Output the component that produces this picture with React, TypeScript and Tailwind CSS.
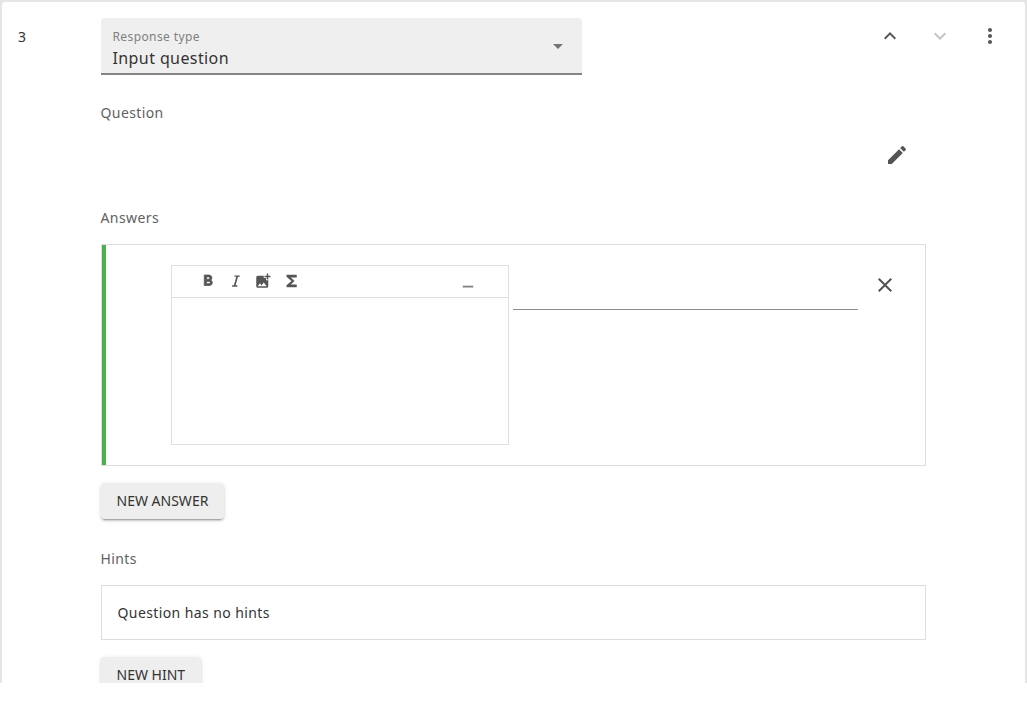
const font = { fontFamily: '"Noto Sans", sans-serif' }

function MdIcon({ d, className }: { d: string; className?: string }) {
    return (
        <svg viewBox="0 0 24 24" className={className} fill="currentColor">
            <path d={d} />
        </svg>
    )
}

const paths = {
    up: 'M7.41 15.41 12 10.83l4.59 4.58L18 14l-6-6-6 6z',
    down: 'M7.41 8.59 12 13.17l4.59-4.58L18 10l-6 6-6-6z',
    more: 'M12 8c1.1 0 2-.9 2-2s-.9-2-2-2-2 .9-2 2 .9 2 2 2zm0 2c-1.1 0-2 .9-2 2s.9 2 2 2 2-.9 2-2-.9-2-2-2zm0 6c-1.1 0-2 .9-2 2s.9 2 2 2 2-.9 2-2-.9-2-2-2z',
    edit: 'M3 17.25V21h3.75L17.81 9.94l-3.75-3.75L3 17.25zM20.71 7.04a1 1 0 0 0 0-1.41l-2.34-2.34a1 1 0 0 0-1.41 0l-1.83 1.83 3.75 3.75 1.83-1.83z',
    close: 'M19 6.41 17.59 5 12 10.59 6.41 5 5 6.41 10.59 12 5 17.59 6.41 19 12 13.41 17.59 19 19 17.59 13.41 12z',
    bold: 'M15.6 10.79c.97-.67 1.65-1.77 1.65-2.79 0-2.26-1.75-4-4-4H7v14h7.04c2.09 0 3.71-1.7 3.71-3.79 0-1.52-.86-2.82-2.15-3.42zM10 6.5h3c.83 0 1.5.67 1.5 1.5s-.67 1.5-1.5 1.5h-3v-3zm3.5 9H10v-3h3.5c.83 0 1.5.67 1.5 1.5s-.67 1.5-1.5 1.5z',
    italic: 'M10 4.5v1.7h2.4L9.2 17.8H6.8v1.7h7v-1.7h-2.3l3.2-11.6h2.3V4.5z',
    image: 'M19 7v2.99s-1.99.01-2 0V7h-3s.01-1.99 0-2h3V2h2v3h3v2h-3zm-3 4V8h-3V5H5a2 2 0 0 0-2 2v12c0 1.1.9 2 2 2h12a2 2 0 0 0 2-2v-8h-3zM5 19l3-4 2 3 3-4 4 5H5z',
    sigma: 'M18 4H5v2.2l6.6 5.8L5 17.8V20h13v-3h-8l5-5-5-5h8z',
    minus: 'M19 14H5v-2.4h14V14z',
}

function ToolIcon({ d, className }: { d: string; className?: string }) {
    return <MdIcon d={d} className={`w-[18px] h-[18px] ${className ?? ''}`} />
}

function RaisedButton({ label }: { label: string }) {
    return (
        <button className="h-9 px-4 rounded bg-[#eeeeee] text-sm leading-9 tracking-normal text-[#333333] shadow-[0_3px_1px_-2px_rgba(0,0,0,0.2),0_2px_2px_0_rgba(0,0,0,0.14),0_1px_5px_0_rgba(0,0,0,0.12)]">
            {label}
        </button>
    )
}

export default function App() {
    return (
        <div className="h-[725px] bg-white overflow-hidden tracking-[0.4px]" style={font}>
            <div className="h-[683px] overflow-hidden bg-[#e6e6e6] pt-[2px] px-[2px]">
                <div className="h-[700px] bg-white flex rounded-t-[3px]">
                    <div className="w-[98.5px] shrink-0 pl-4 pt-[25px] text-sm leading-[19px] text-[#333333]">3</div>

                    <div className="w-[825px] shrink-0 flex flex-col items-start">
                        <div className="mt-4 w-[481px] h-[57px] rounded-t bg-[#efefef] border-b-2 border-[#858585] pl-3 pr-4 flex items-center justify-between">
                            <div className="pt-[5px]">
                                <div className="text-xs leading-[15px] text-[#808080]">Response type</div>
                                <div className="mt-1 text-base leading-5 text-[#333333]">Input question</div>
                            </div>
                            <svg viewBox="0 0 10 5" className="w-[10px] h-[5px] mt-[1px] mr-[3px] text-[#757575]" fill="currentColor">
                                <path d="M0 0h10L5 5z" />
                            </svg>
                        </div>

                        <div className="mt-[28px] text-sm leading-[19px] text-[#616161]">Question</div>

                        <div className="w-full h-[86px] flex justify-end items-start pr-[17px] pt-[21px] text-[#555555]">
                            <MdIcon d={paths.edit} className="w-6 h-6" />
                        </div>

                        <div className="text-sm leading-[19px] text-[#616161]">Answers</div>

                        <div className="mt-[17px] w-full h-[222px] border border-[#dddddd] flex">
                            <div className="w-1 bg-[#4caf50] shrink-0" />
                            <div className="flex-1 flex items-start pl-[65px] pt-5">
                                <div className="w-[338px] h-[180px] border border-[#e0e0e0] shrink-0">
                                    <div className="h-[32px] border-b border-[#e0e0e0] flex items-center pl-[27px] pb-[2px] text-[#555555]">
                                        <div className="flex items-center gap-[9.6px]">
                                            <ToolIcon d={paths.bold} className="stroke-current stroke-[1px]" />
                                            <ToolIcon d={paths.italic} className="ml-[1px] -mr-[1px]" />
                                            <ToolIcon d={paths.image} />
                                            <ToolIcon d={paths.sigma} className="ml-[1.5px] stroke-current stroke-[0.6px]" />
                                        </div>
                                        <div className="ml-[158.5px] mt-[10px] text-[#808080]">
                                            <ToolIcon d={paths.minus} />
                                        </div>
                                    </div>
                                </div>
                                <div className="ml-1 w-[345px] h-[45px] border-b border-[#8c8c8c] shrink-0" />
                                <div className="ml-[15px] mt-2 text-[#555555]">
                                    <MdIcon d={paths.close} className="w-6 h-6" />
                                </div>
                            </div>
                        </div>

                        <div className="mt-[17px]">
                            <RaisedButton label="NEW ANSWER" />
                        </div>

                        <div className="mt-[30px] text-sm leading-[19px] text-[#616161]">Hints</div>

                        <div className="mt-[17px] w-full h-[55px] border border-[#dddddd] px-4 flex items-center text-sm text-[#333333]">
                            Question has no hints
                        </div>

                        <div className="mt-[17px]">
                            <RaisedButton label="NEW HINT" />
                        </div>
                    </div>

                    <div className="flex-1 relative">
                        <div className="absolute -left-[48px] top-[22px] flex gap-[26px] text-[#555555]">
                            <MdIcon d={paths.up} className="w-6 h-6" />
                            <MdIcon d={paths.down} className="w-6 h-6 text-[#c4c4c4]" />
                            <MdIcon d={paths.more} className="w-6 h-6" />
                        </div>
                    </div>
                </div>
            </div>
        </div>
    )
}
